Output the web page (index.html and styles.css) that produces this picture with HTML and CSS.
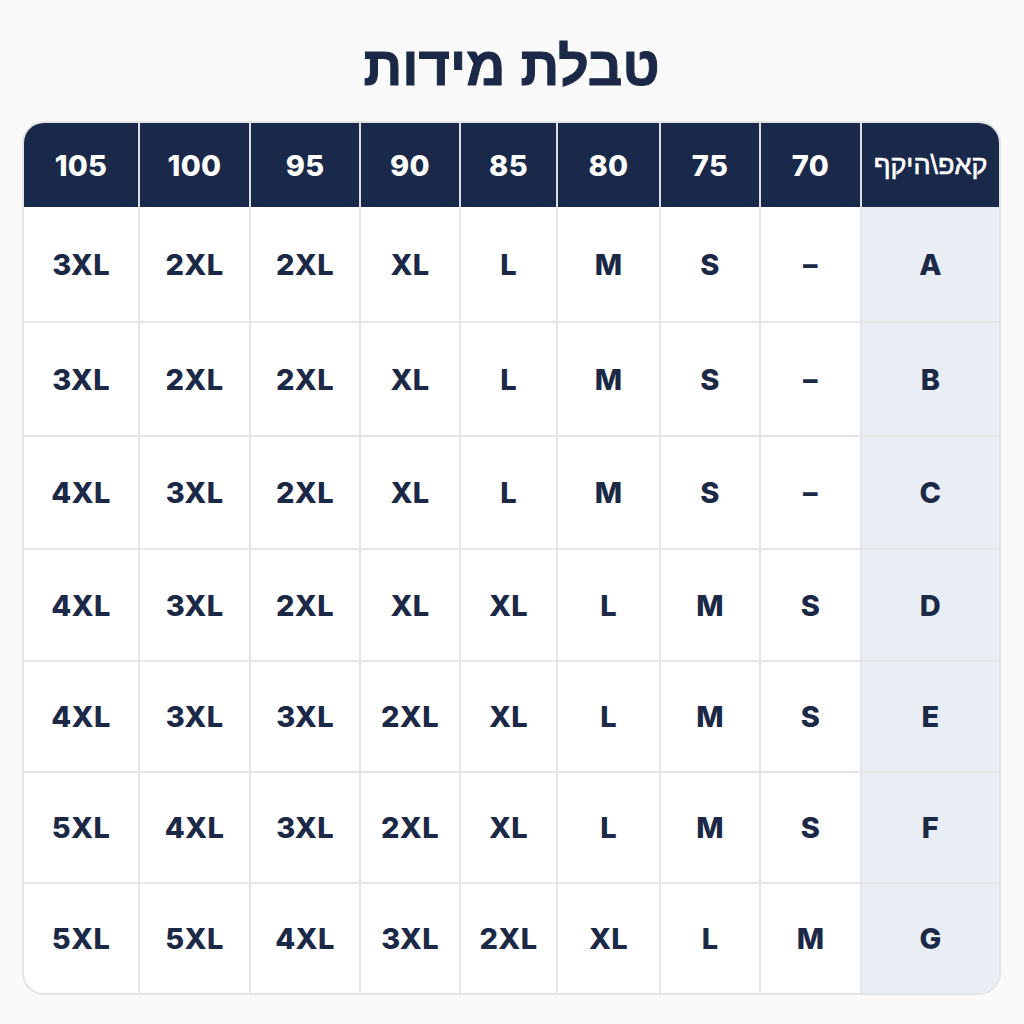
FILE: index.html
```html
<!DOCTYPE html>
<html lang="he" dir="rtl">
<head>
<meta charset="utf-8">
<title>טבלת מידות</title>
<link rel="stylesheet" href="styles.css">
</head>
<body>
<main class="page">
  <h1 class="title">טבלת מידות</h1>
  <div class="table-wrap">
    <table class="sizes">
      <colgroup>
        <col class="c-cup"><col class="c70"><col class="c75"><col class="c80"><col class="c85"><col class="c90"><col class="c95"><col class="c100"><col class="c105">
      </colgroup>
      <thead>
        <tr>
          <th class="corner">קאפ\היקף</th>
          <th>70</th><th>75</th><th>80</th><th>85</th><th>90</th><th>95</th><th>100</th><th>105</th>
        </tr>
      </thead>
      <tbody>
        <tr><th>A</th><td>–</td><td>S</td><td>M</td><td>L</td><td>XL</td><td>2XL</td><td>2XL</td><td>3XL</td></tr>
        <tr><th>B</th><td>–</td><td>S</td><td>M</td><td>L</td><td>XL</td><td>2XL</td><td>2XL</td><td>3XL</td></tr>
        <tr><th>C</th><td>–</td><td>S</td><td>M</td><td>L</td><td>XL</td><td>2XL</td><td>3XL</td><td>4XL</td></tr>
        <tr><th>D</th><td>S</td><td>M</td><td>L</td><td>XL</td><td>XL</td><td>2XL</td><td>3XL</td><td>4XL</td></tr>
        <tr><th>E</th><td>S</td><td>M</td><td>L</td><td>XL</td><td>2XL</td><td>3XL</td><td>3XL</td><td>4XL</td></tr>
        <tr><th>F</th><td>S</td><td>M</td><td>L</td><td>XL</td><td>2XL</td><td>3XL</td><td>4XL</td><td>5XL</td></tr>
        <tr><th>G</th><td>M</td><td>L</td><td>XL</td><td>2XL</td><td>3XL</td><td>4XL</td><td>5XL</td><td>5XL</td></tr>
      </tbody>
    </table>
  </div>
</main>
</body>
</html>
```
FILE: styles.css
```css
html, body {
  margin: 0;
  padding: 0;
  background: #fafafa;
}
body {
  font-family: "Inter", "Liberation Sans", "DejaVu Sans", sans-serif;
  color: #1b2947;
}
.page {
  width: 1024px;
  height: 1024px;
  box-sizing: border-box;
  padding: 0 23px 0 22px;
}
.title {
  margin: 0;
  height: 121px;
  line-height: 132px;
  text-align: center;
  font-family: "Liberation Sans", "DejaVu Sans", sans-serif;
  font-weight: 700;
  font-size: 54px;
  color: #1b2947;
  box-sizing: border-box;
  -webkit-text-stroke: 1px #1b2947;
}
.table-wrap {
  border: 2px solid #e3e4e6;
  border-radius: 22px;
  overflow: hidden;
  background: #ffffff;
  box-sizing: border-box;
  width: 979px;
}
.sizes {
  width: 100%;
  border-collapse: collapse;
  table-layout: fixed;
}
.c-cup { width: 138px; }
.c70 { width: 101px; }
.c75 { width: 100px; }
.c80 { width: 103px; }
.c85 { width: 97px; }
.c90 { width: 100px; }
.c95 { width: 110px; }
.c100 { width: 111px; }
.c105 { width: 115px; }
.sizes th, .sizes td {
  padding: 0;
  text-align: center;
  vertical-align: middle;
  font-weight: 800;
  font-size: 29px;
  letter-spacing: 0.3px;
}
.sizes thead th {
  height: 84px;
  background: #1a2849;
  color: #ffffff;
  border-left: 2px solid #d9dde5;
  padding-top: 0;
}
.sizes thead th:last-child {
  border-left: none;
}
.sizes thead th.corner {
  font-family: "Liberation Sans", "DejaVu Sans", sans-serif;
  font-weight: 400;
  font-size: 27px;
  letter-spacing: 0;
  -webkit-text-stroke: 0.6px #ffffff;
}
.sizes tbody td, .sizes tbody th {
  border-left: 2px solid #e4e5e7;
  border-top: 2px solid #e4e5e7;
  color: #1b2947;
}
.sizes tbody tr:first-child td, .sizes tbody tr:first-child th {
  border-top: none;
}
.sizes tbody td:last-child {
  border-left: none;
}
.sizes tbody th {
  background: #e9eef5;
}
.sizes tbody tr:nth-child(1) > * { height: 114px; }
.sizes tbody tr:nth-child(2) > * { height: 112px; }
.sizes tbody tr:nth-child(3) > * { height: 111px; }
.sizes tbody tr:nth-child(4) > * { height: 110px; }
.sizes tbody tr:nth-child(5) > * { height: 109px; }
.sizes tbody tr:nth-child(6) > * { height: 109px; }
.sizes tbody tr:nth-child(7) > * { height: 109px; }
```
